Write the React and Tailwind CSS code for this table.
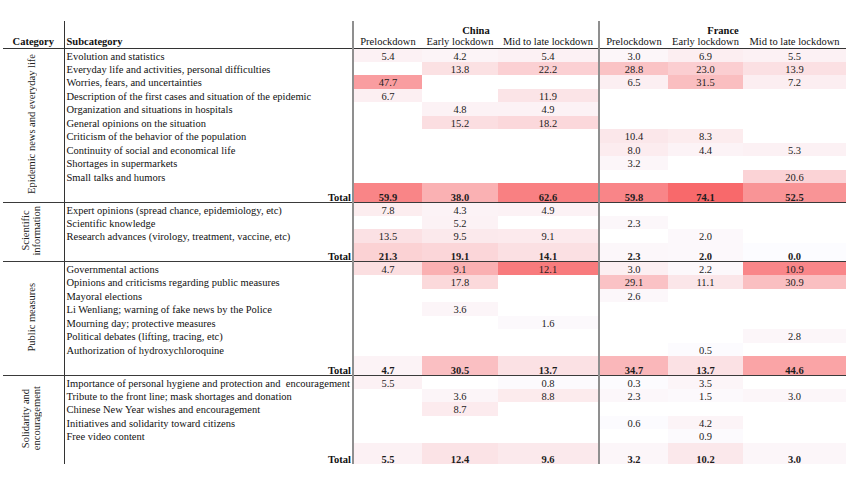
const periods = ['Prelockdown', 'Early lockdown', 'Mid to late lockdown']

const sections = [
  {
    name: ['Epidemic news and everyday life'],
    rows: [
      { label: 'Evolution and statistics', v: [5.4, 4.2, 5.4, 3.0, 6.9, 5.5] },
      { label: 'Everyday life and activities, personal difficulties', v: [null, 13.8, 22.2, 28.8, 23.0, 13.9] },
      { label: 'Worries, fears, and uncertainties', v: [47.7, null, null, 6.5, 31.5, 7.2] },
      { label: 'Description of the first cases and situation of the epidemic', v: [6.7, null, 11.9, null, null, null] },
      { label: 'Organization and situations in hospitals', v: [null, 4.8, 4.9, null, null, null] },
      { label: 'General opinions on the situation', v: [null, 15.2, 18.2, null, null, null] },
      { label: 'Criticism of the behavior of the population', v: [null, null, null, 10.4, 8.3, null] },
      { label: 'Continuity of social and economical life', v: [null, null, null, 8.0, 4.4, 5.3] },
      { label: 'Shortages in supermarkets', v: [null, null, null, 3.2, null, null] },
      { label: 'Small talks and humors', v: [null, null, null, null, null, 20.6] },
    ],
    total: [59.9, 38.0, 62.6, 59.8, 74.1, 52.5],
  },
  {
    name: ['Scientific', 'information'],
    rows: [
      { label: 'Expert opinions (spread chance, epidemiology, etc)', v: [7.8, 4.3, 4.9, null, null, null] },
      { label: 'Scientific knowledge', v: [null, 5.2, null, 2.3, null, null] },
      { label: 'Research advances (virology, treatment, vaccine, etc)', v: [13.5, 9.5, 9.1, null, 2.0, null] },
    ],
    total: [21.3, 19.1, 14.1, 2.3, 2.0, 0.0],
  },
  {
    name: ['Public measures'],
    rows: [
      { label: 'Governmental actions', v: [4.7, 9.1, 12.1, 3.0, 2.2, 10.9], tone: [0.2, 0.52, 0.88, 0.09, 0.03, 0.8] },
      { label: 'Opinions and criticisms regarding public measures', v: [null, 17.8, null, 29.1, 11.1, 30.9] },
      { label: 'Mayoral elections', v: [null, null, null, 2.6, null, null] },
      { label: 'Li Wenliang; warning of fake news by the Police', v: [null, 3.6, null, null, null, null] },
      { label: 'Mourning day; protective measures', v: [null, null, 1.6, null, null, null] },
      { label: 'Political debates (lifting, tracing, etc)', v: [null, null, null, null, null, 2.8] },
      { label: 'Authorization of hydroxychloroquine', v: [null, null, null, null, 0.5, null] },
    ],
    total: [4.7, 30.5, 13.7, 34.7, 13.7, 44.6],
  },
  {
    name: ['Solidarity and', 'encouragement'],
    rows: [
      { label: 'Importance of personal hygiene and protection and  encouragement', v: [5.5, null, 0.8, 0.3, 3.5, null] },
      { label: 'Tribute to the front line; mask shortages and donation', v: [null, 3.6, 8.8, 2.3, 1.5, 3.0] },
      { label: 'Chinese New Year wishes and encouragement', v: [null, 8.7, null, null, null, null] },
      { label: 'Initiatives and solidarity toward citizens', v: [null, null, null, 0.6, 4.2, null] },
      { label: 'Free video content', v: [null, null, null, null, 0.9, null] },
    ],
    total: [5.5, 12.4, 9.6, 3.2, 10.2, 3.0],
  },
]

// white -> red colour scale, same end points as a spreadsheet heat map
const heat = (t) =>
  `rgb(${Math.round(252 - 4 * t)},${Math.round(252 - 147 * t)},${Math.round(255 - 148 * t)})`

const ValueCell = ({ value, tone, index, bold, ruled }) => {
  const t = tone ?? (value == null ? 0 : value / 74.1)
  return (
    <td
      className={`p-0 text-center text-[#1c1c1c] ${bold ? 'font-bold align-bottom leading-[9px]' : 'align-middle pt-[2px]'} ${
        index === 2 ? 'border-r-2 border-r-[#8f8f8f]' : ''
      } ${ruled ? 'border-b border-b-[#3a3a3a]' : ''}`}
      style={value == null ? undefined : { backgroundColor: heat(t) }}
    >
      {value == null ? '' : value.toFixed(1)}
    </td>
  )
}

export default function App() {
  return (
    <div className="w-[850px] h-[478px] bg-white pt-[21px] pl-[3px] font-['Liberation_Serif','Times_New_Roman',serif] text-[10.5px] leading-[12px] text-[#111]">
      <table className="table-fixed border-collapse w-[843px]">
        <colgroup>
          <col className="w-[61px]" />
          <col className="w-[289px]" />
          <col className="w-[69px]" />
          <col className="w-[76px]" />
          <col className="w-[101px]" />
          <col className="w-[69px]" />
          <col className="w-[75px]" />
          <col className="w-[103px]" />
        </colgroup>
        <thead>
          <tr className="h-[16px]">
            <td className="p-0 border-r border-r-[#333]" />
            <td className="p-0 border-r-2 border-r-[#8f8f8f]" />
            <th colSpan={3} className="p-0 align-bottom font-bold border-r-2 border-r-[#8f8f8f]">China</th>
            <th colSpan={3} className="p-0 align-bottom font-bold">France</th>
          </tr>
          <tr className="h-[11px] leading-[10px] border-b border-b-[#333]">
            <th className="p-0 font-bold text-center align-top border-r border-r-[#333]">Category</th>
            <th className="p-0 pl-[2px] font-bold text-left align-top border-r-2 border-r-[#8f8f8f]">Subcategory</th>
            {[0, 1].map((c) =>
              periods.map((p, i) => (
                <th
                  key={`${c}-${i}`}
                  className={`p-0 font-normal text-center align-top whitespace-nowrap ${
                    i === 2 && c === 0 ? 'border-r-2 border-r-[#8f8f8f]' : ''
                  }`}
                >
                  {p}
                </th>
              ))
            )}
          </tr>
        </thead>
        <tbody className="leading-[11px]">
          {sections.map((s, si) => {
            const ruled = si < sections.length - 1
            return [
              ...s.rows.map((r, ri) => (
                <tr key={`${si}-${ri}`} className="h-[13.5px]">
                  {ri === 0 && (
                    <td
                      rowSpan={s.rows.length + 1}
                      className={`p-0 pr-[4px] text-center align-middle border-r border-r-[#333] text-[#222] ${
                        ruled ? 'border-b border-b-[#3a3a3a]' : ''
                      }`}
                    >
                      <div className="inline-block [writing-mode:vertical-rl] rotate-180 text-center text-[10.5px] leading-[11px] whitespace-nowrap">
                        {s.name.map((n) => (
                          <div key={n}>{n}</div>
                        ))}
                      </div>
                    </td>
                  )}
                  <td className="p-0 pt-[2px] pl-[2px] whitespace-pre overflow-hidden border-r-2 border-r-[#8f8f8f]">
                    {r.label}
                  </td>
                  {r.v.map((v, i) => (
                    <ValueCell key={i} value={v} tone={r.tone?.[i]} index={i} />
                  ))}
                </tr>
              )),
              <tr key={`${si}-total`} className={ruled ? 'h-[19px]' : 'h-[21px]'}>
                <td
                  className={`p-0 pr-[1px] text-right font-bold align-bottom leading-[9px] border-r-2 border-r-[#8f8f8f] ${
                    ruled ? 'border-b border-b-[#3a3a3a]' : ''
                  }`}
                >
                  Total
                </td>
                {s.total.map((v, i) => (
                  <ValueCell key={i} value={v} index={i} bold ruled={ruled} />
                ))}
              </tr>,
            ]
          })}
        </tbody>
      </table>
    </div>
  )
}
